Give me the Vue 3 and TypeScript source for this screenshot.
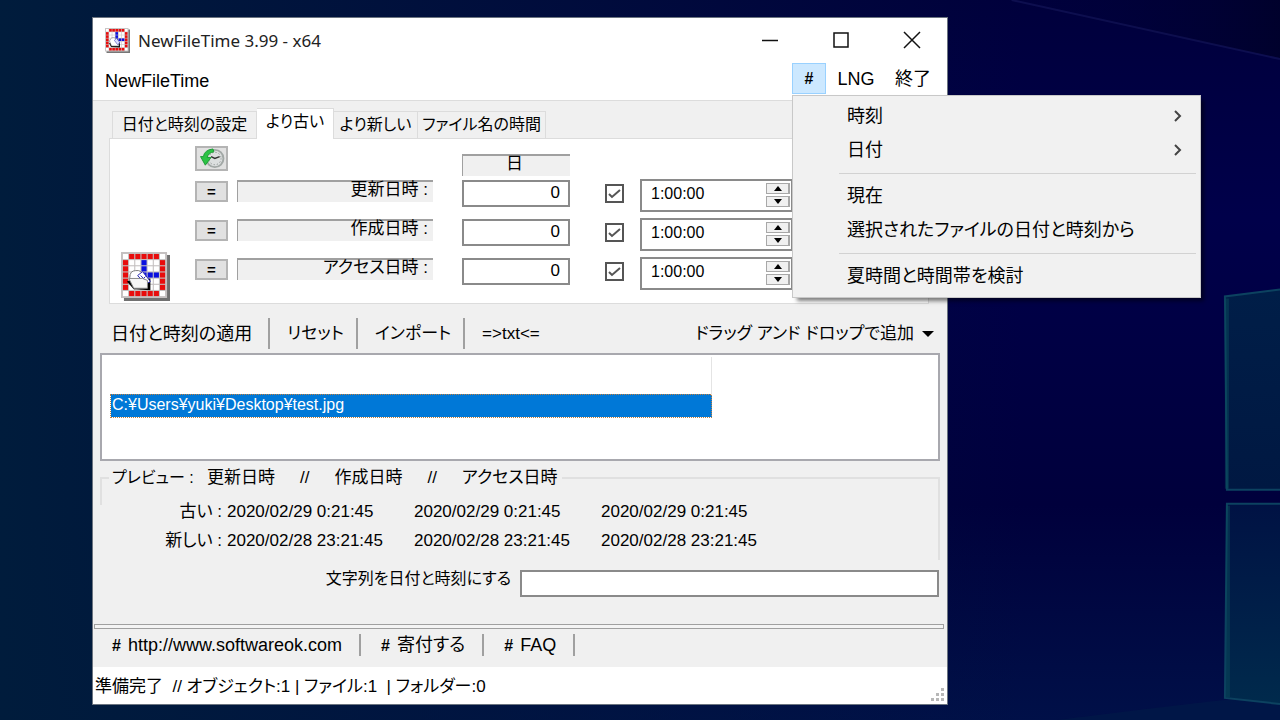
<script setup lang="ts">
import { ref } from 'vue'

interface OffsetRow {
  id: string
  label: string
  days: string
  enabled: boolean
  time: string
}

const tabs: string[] = ['日付と時刻の設定', 'より古い', 'より新しい', 'ファイル名の時間']
const activeTab = ref<number>(1)

const rows = ref<OffsetRow[]>([
  { id: 'modified', label: '更新日時', days: '0', enabled: true, time: '1:00:00' },
  { id: 'created', label: '作成日時', days: '0', enabled: true, time: '1:00:00' },
  { id: 'accessed', label: 'アクセス日時', days: '0', enabled: true, time: '1:00:00' },
])

const files = ref<string[]>(['C:¥Users¥yuki¥Desktop¥test.jpg'])
const actions: string[] = ['日付と時刻の適用', 'リセット', 'インポート', '=>txt<=']
const previews = [
  { label: '古い :', value: '2020/02/29 0:21:45' },
  { label: '新しい :', value: '2020/02/28 23:21:45' },
]
const dateText = ref<string>('')

/* Cells of the 7 x 7 application icon: r = red, b = blue, w = white */
const iconCells: string[] = ['wrrrrrw', 'rwwbwwr', 'rwwbwwr', 'rwwbbbr', 'rwwwwwr', 'rwwwwwr', 'wrrrrrw']
const cellColor: Record<string, string> = { r: '#e80c0c', b: '#0a10e0', w: '#ffffff' }
</script>

<template>
  <div class="desktop">
    <svg class="wallpaper" viewBox="0 0 1280 720" preserveAspectRatio="xMaxYMid slice" aria-hidden="true">
      <defs>
        <linearGradient id="beam" x1="0" y1="0" x2="1" y2="0">
          <stop offset="0" stop-color="#00023c" stop-opacity="0" />
          <stop offset="1" stop-color="#000128" stop-opacity=".8" />
        </linearGradient>
        <linearGradient id="pane" x1="0" y1="0" x2="0" y2="1">
          <stop offset="0" stop-color="#001e48" />
          <stop offset="1" stop-color="#001842" />
        </linearGradient>
        <linearGradient id="pane2" x1="0" y1="0" x2="0" y2="1">
          <stop offset="0" stop-color="#001244" />
          <stop offset="1" stop-color="#002a4c" />
        </linearGradient>
      </defs>
      <path d="M1000 0H1280V58Z" fill="url(#beam)" />
      <path d="M1012 0L1280 59" stroke="#16185c" stroke-width="2" opacity=".6" />
      <path d="M1050 720Q1160 706 1225 699L1280 690V720Z" fill="#001a48" opacity=".6" />
      <path d="M1225 296L1280 289V489H1227Z" fill="url(#pane)" />
      <path d="M1227 503H1280V703L1225 697Z" fill="url(#pane2)" />
      <path d="M1280 289L1225 296L1227 489H1280M1280 503H1227L1225 697L1280 703" fill="none" stroke="#0c4260" stroke-width="2" />
      <path d="M1227 298V488M1228 505V696" stroke="#0a4a5c" stroke-width="4" opacity=".5" />
    </svg>

    <main class="window">
      <header class="titlebar">
        <svg class="app-icon" viewBox="0 0 50 50" aria-hidden="true">
          <path d="M3 3H50V50H3Z" fill="#777" />
          <path d="M0 0H47V47H0Z" fill="#c9c4c4" />
          <template v-for="(line, y) in iconCells" :key="y">
            <rect v-for="(c, x) in line.split('')" :key="x" :x="2 + x * 6.3" :y="2 + y * 6.3" width="5.2" height="5.2" :fill="cellColor[c]" />
          </template>
          <path d="M8 30L30 28V39L12 38Z" fill="#111" />
          <path d="M9 26Q12 17 20 20L26 24L28 36H13Z" fill="#fff" stroke="#555" />
          <path d="M19 25L23 20L30 30L25 33Z" fill="#dde0ff" stroke="#2020a0" />
        </svg>
        <h1>NewFileTime 3.99 - x64</h1>
        <div class="captions">
          <button type="button" aria-label="最小化"><svg viewBox="0 0 18 18"><path d="M1 9.500H17" /></svg></button>
          <button type="button" aria-label="最大化"><svg viewBox="0 0 18 18"><path d="M2 2H16V16H2Z" /></svg></button>
          <button type="button" aria-label="閉じる"><svg viewBox="0 0 18 18"><path d="M1 1L17 17M17 1L1 17" /></svg></button>
        </div>
      </header>

      <nav class="menubar">
        <button type="button" class="menu-item brand">NewFileTime</button>
        <div class="menu-anchor">
          <button type="button" class="menu-item hash" aria-haspopup="menu" aria-expanded="true">#</button>
          <div class="popup" role="menu">
            <button type="button" role="menuitem">時刻<svg viewBox="0 0 8 12"><path d="M1 1L6 6L1 11" /></svg></button>
            <button type="button" role="menuitem">日付<svg viewBox="0 0 8 12"><path d="M1 1L6 6L1 11" /></svg></button>
            <hr />
            <button type="button" role="menuitem">現在</button>
            <button type="button" role="menuitem">選択されたファイルの日付と時刻から</button>
            <hr />
            <button type="button" role="menuitem">夏時間と時間帯を検討</button>
          </div>
        </div>
        <button type="button" class="menu-item lng">LNG</button>
        <button type="button" class="menu-item quit">終了</button>
      </nav>

      <section class="body">
        <div class="tabs" role="tablist">
          <button
            v-for="(tab, i) in tabs"
            :key="tab"
            type="button"
            role="tab"
            :class="['tab', { active: i === activeTab }]"
            :aria-selected="i === activeTab"
            @click="activeTab = i"
          >{{ tab }}</button>
        </div>

        <div class="panel" role="tabpanel">
          <svg class="big-icon" viewBox="0 0 50 50" aria-hidden="true">
            <path d="M3 3H50V50H3Z" fill="#707070" />
            <path d="M0 0H47V47H0Z" fill="#c4c0c0" />
            <template v-for="(line, y) in iconCells" :key="y">
              <rect v-for="(c, x) in line.split('')" :key="x" :x="2 + x * 6.3" :y="2 + y * 6.3" width="5.2" height="5.2" :fill="cellColor[c]" />
            </template>
            <path d="M6 30L11 28L30 27V39L13 38Z" fill="#000" />
            <path d="M9 26Q9 19 15 19Q21 18 22 24L26 27V30H10Z" fill="#fff" stroke="#777" />
            <path d="M17 24L22 20L30 30L25 33Z" fill="#fff" stroke="#2424b0" />
            <path d="M20 24L26 30M22 28L25 25" stroke="#2424b0" />
            <path d="M8 27H22L27 29V37H13Z" fill="#f6f6f6" stroke="#888" />
          </svg>
          <div class="grid">
            <button type="button" class="small-button clock" aria-label="現在時刻に戻す">
              <svg viewBox="0 0 26 22">
                <circle cx="16" cy="11" r="9" fill="#dcdfdf" stroke="#a2a8a6" stroke-width="2" />
                <circle cx="16" cy="11" r="6.500" fill="none" stroke="#717876" stroke-dasharray="1 2.400" />
                <path d="M12 9L16 11L21 9" fill="none" stroke="#333" stroke-width="1.500" />
                <path d="M14 1Q5 2 4 9H1L6 18L12 10H8Q9 5 15 4Z" fill="#2cc345" stroke="#1c9a35" />
              </svg>
            </button>
            <div class="sunken day">日</div>
            <template v-for="row in rows" :key="row.id">
              <button type="button" class="small-button equals" :aria-label="row.label + ' ='">=</button>
              <label class="sunken name" :for="row.id">{{ row.label }} :</label>
              <input :id="row.id" v-model="row.days" class="days" type="text" />
              <label class="check">
                <input v-model="row.enabled" type="checkbox" :aria-label="row.label" />
                <svg v-if="row.enabled" viewBox="0 0 19 19" aria-hidden="true"><path d="M4 10L7 13L15 6" /></svg>
              </label>
              <div class="time">
                <input v-model="row.time" type="text" :aria-label="row.label + ' 時間'" />
                <div class="spin">
                  <button type="button" aria-label="増やす"><svg viewBox="0 0 10 5"><path d="M1 5L5 0L9 5Z" /></svg></button>
                  <button type="button" aria-label="減らす"><svg viewBox="0 0 10 5"><path d="M1 0L5 5L9 0Z" /></svg></button>
                </div>
              </div>
            </template>
          </div>
        </div>

        <div class="toolbar">
          <button v-for="action in actions" :key="action" type="button">{{ action }}</button>
          <button type="button" class="drop" aria-haspopup="menu">
            ドラッグ アンド ドロップで追加
            <svg viewBox="0 0 12 6"><path d="M0 0H12L6 6Z" /></svg>
          </button>
        </div>

        <div class="list">
          <table>
            <thead><tr><th aria-label="ファイル"></th></tr></thead>
            <tbody><tr v-for="file in files" :key="file"><td>{{ file }}</td></tr></tbody>
          </table>
        </div>

        <fieldset class="preview">
          <legend>
            <span class="head">プレビュー :</span>
            <span>更新日時</span><span>//</span><span>作成日時</span><span>//</span><span>アクセス日時</span>
          </legend>
          <div v-for="p in previews" :key="p.label" class="preview-row">
            <span class="preview-label">{{ p.label }}</span>
            <span v-for="n in 3" :key="n">{{ p.value }}</span>
          </div>
        </fieldset>

        <div class="convert">
          <label for="date-text">文字列を日付と時刻にする</label>
          <input id="date-text" v-model="dateText" type="text" />
        </div>

        <div class="splitter"></div>

        <nav class="links">
          <a href="#home"><b>#</b> http://www.softwareok.com</a>
          <a href="#donate"><b>#</b> 寄付する</a>
          <a href="#faq"><b>#</b> FAQ</a>
        </nav>
      </section>

      <footer class="status">
        <span>準備完了&nbsp; // オブジェクト:1 | ファイル:1&nbsp; | フォルダー:0</span>
        <svg viewBox="0 0 13 13" aria-hidden="true">
          <path d="M10 0h3v3h-3zM5 5h3v3H5zM10 5h3v3h-3zM0 10h3v3H0zM5 10h3v3H5zM10 10h3v3h-3z" />
        </svg>
      </footer>
    </main>
  </div>
</template>

<style>
body {
  margin: 0;
  background: #00083a;
}
</style>

<style scoped>
* {
  box-sizing: border-box;
}

.desktop {
  position: relative;
  min-height: 100vh;
  padding: 17px 332px 16px 92px;
  overflow: hidden;
  color: #000;
  font-family: "Liberation Sans", "Noto Sans CJK JP", sans-serif;
  font-size: 17px;
  line-height: 20px;
  font-feature-settings: "palt";
  background:
    linear-gradient(90deg, #001c3c 0%, rgba(0, 24, 60, 0.7) 30%, rgba(0, 8, 60, 0) 80%),
    linear-gradient(180deg, #00003c 0%, #00004a 30%, #00003c 70%, #001048 100%);
}

.wallpaper {
  position: absolute;
  inset: 0;
  width: 100%;
  height: 100%;
}

button,
input {
  margin: 0;
  padding: 0;
  border: 0;
  border-radius: 0;
  outline: 0;
  background: none;
  color: inherit;
  font: inherit;
  font-feature-settings: inherit;
}

button {
  white-space: nowrap;
}

.window {
  position: relative;
  border: 1px solid #6b7480;
  background: #fff;
}

.titlebar {
  display: flex;
  align-items: center;
  height: 45px;
  padding-left: 12px;
}

.app-icon {
  width: 25px;
  height: 25px;
}

.titlebar h1 {
  flex: 1;
  margin: 0 0 0 8px;
  font-family: "Noto Sans", sans-serif;
  font-size: 17px;
  font-weight: 400;
  color: #222;
}

.captions {
  display: flex;
  align-self: flex-start;
}

.captions button {
  display: grid;
  place-items: center;
  width: 71px;
  height: 43px;
}

.captions svg {
  width: 18px;
  height: 18px;
  fill: none;
  stroke: #111;
  stroke-width: 1.5;
}

.menubar {
  display: flex;
  align-items: center;
  height: 38px;
  padding: 0 7px 6px 12px;
  border-bottom: 1px solid #dcdcdc;
  font-size: 18px;
}

.brand {
  margin-right: auto;
  padding-top: 4px;
}

.menu-anchor {
  position: relative;
}

.hash {
  width: 34px;
  height: 31px;
  border: 1px solid #99d1ff;
  background: #cce8ff;
  font-size: 16px;
  font-weight: 700;
}

.lng {
  width: 60px;
}

.quit {
  width: 54px;
}

.popup {
  position: absolute;
  z-index: 2;
  top: 32px;
  left: 0;
  display: flex;
  flex-direction: column;
  width: 409px;
  padding: 3px 4px 4px;
  border: 1px solid #c8c8c8;
  background: #f1f1f1;
  box-shadow: 4px 4px 4px -1px rgba(0, 0, 0, 0.5);
}

.popup button {
  display: flex;
  align-items: center;
  justify-content: space-between;
  height: 34px;
  padding: 0 14px 0 50px;
  font-size: 18px;
  text-align: left;
}

.popup svg {
  width: 8px;
  height: 12px;
  fill: none;
  stroke: #444;
  stroke-width: 2;
}

.popup hr {
  width: 357px;
  height: 1px;
  margin: 6px 0 5px auto;
  border: 0;
  background: #d2d2d2;
}

.body {
  padding: 7px 7px 0;
  background: #f0f0f0;
}

.tabs {
  display: grid;
  grid-template-columns: 145px 77px 84px 128px;
  align-items: end;
  height: 30px;
  padding-left: 12px;
  font-size: 16px;
}

.tab {
  height: 27px;
  border: 1px solid #dcdcdc;
  border-bottom: 0;
  border-left: 0;
}

.tab:first-child {
  border-left: 1px solid #dcdcdc;
}

.tab.active {
  position: relative;
  z-index: 1;
  height: 31px;
  margin-bottom: -1px;
  padding-bottom: 5px;
  background: #fff;
}

.panel {
  display: flex;
  height: 166px;
  margin: 0 11px 0 9px;
  border: 1px solid #dcdcdc;
  background: #fff;
}

.big-icon {
  flex: none;
  align-self: flex-end;
  width: 49px;
  height: 49px;
  margin: 0 25px 2px 11px;
}

.grid {
  display: grid;
  grid-template-columns: 33px 9px 196px 29px 108px 35px 20px 15px 153px;
  grid-template-rows: 33px 39px 39px 39px;
  align-items: start;
  padding-top: 7px;
}

.small-button {
  grid-column: 1;
  height: 21px;
  margin-top: 2px;
  border: 2px solid #b4b4b4;
  background: #e1e1e1;
  font-size: 15px;
  font-weight: 700;
  line-height: 15px;
}

.clock {
  display: grid;
  place-items: center;
  height: 25px;
  margin-top: 0;
}

.clock svg {
  width: 26px;
  height: 21px;
}

.sunken {
  height: 22px;
  margin-top: 1px;
  border-top: 2px solid #a0a0a0;
  border-left: 1px solid #a0a0a0;
  background: #f0f0f0;
  line-height: 16px;
}

.day {
  grid-column: 5;
  margin-top: 8px;
  padding-right: 4px;
  text-align: center;
}

.name {
  grid-column: 3;
  padding-right: 5px;
  text-align: right;
}

.days {
  grid-column: 5;
  width: 108px;
  height: 27px;
  margin-top: 1px;
  padding: 0 8px 2px;
  border: 2px solid #8a8a8a;
  text-align: right;
}

.check {
  grid-column: 7;
  display: grid;
  margin-top: 5px;
}

.check input,
.check svg {
  grid-area: 1 / 1;
  width: 19px;
  height: 19px;
}

.check input {
  appearance: none;
  border: 2px solid #555;
  background: #fff;
}

.check svg {
  fill: none;
  stroke: #555;
  stroke-width: 2;
  pointer-events: none;
}

.time {
  grid-column: 9;
  display: flex;
  height: 33px;
  padding: 2px 0 3px;
  border: 2px solid #8a8a8a;
}

.time input {
  flex: 1;
  min-width: 0;
  padding: 0 0 3px 9px;
  font-size: 16px;
}

.spin {
  display: flex;
  flex-direction: column;
  gap: 2px;
  width: 25px;
}

.spin button {
  display: grid;
  place-items: center;
  width: 24px;
  height: 11px;
  border: 1px solid #a8a8a8;
  border-width: 1px 2px 1px 1px;
  background: #f0f0f0;
}

.spin svg {
  width: 10px;
  height: 5px;
}

.toolbar {
  display: flex;
  align-items: center;
  height: 49px;
  padding: 10px 6px 0 0;
}

.toolbar button {
  height: 31px;
  padding: 0 12px 0 17px;
  border-left: 2px solid #a0a0a0;
}

.toolbar button:first-child {
  padding: 0 16px 0 11px;
  border: 0;
  font-size: 18px;
}

.toolbar .drop {
  display: flex;
  align-items: center;
  gap: 8px;
  margin-left: auto;
  padding: 0;
  border: 0;
}

.drop svg {
  width: 12px;
  height: 6px;
}

.list {
  height: 108px;
  padding: 2px 8px;
  border: 2px solid #a8a8ae;
  background: #fff;
}

.list table {
  width: 602px;
  border-collapse: collapse;
}

.list th {
  height: 37px;
  padding: 0;
  border-right: 1px solid #e4e4e4;
}

.list td {
  height: 23px;
  padding: 0 0 2px 1px;
  border: 1px dotted #c08040;
  background: #0078d7;
  color: #fff;
  font-size: 16px;
  line-height: 18px;
}

.preview {
  height: 92px;
  min-width: 0;
  margin: 7px 0 0;
  padding: 14px 0 0;
  border: 2px solid #e0e0e0;
  border-bottom: 0;
  border-left: 0;
  background: linear-gradient(#e0e0e0, #e0e0e0) 0 0 / 2px 26px no-repeat;
}

.preview legend {
  display: flex;
  margin-left: 9px;
  padding: 0 4px 0 3px;
  gap: 0 25px;
}

.preview .head {
  width: 70px;
  font-size: 16px;
  white-space: nowrap;
}

.preview-row {
  display: grid;
  grid-template-columns: 122px 182px 182px 1fr;
  gap: 5px;
  height: 29px;
}

.preview-label {
  text-align: right;
}

.convert {
  display: flex;
  gap: 9px;
  margin-top: 10px;
  padding-right: 1px;
}

.convert label {
  width: 411px;
  font-size: 16px;
  line-height: 18px;
  text-align: right;
}

.convert input {
  flex: 1;
  min-width: 0;
  height: 27px;
  padding: 0 6px;
  border: 2px solid #8a8a8a;
  background: #fff;
}

.splitter {
  height: 5px;
  margin: 27px -4px 0 -6px;
  border: 1px solid #a0a0a0;
  background: #f4f4f4;
}

.links {
  display: flex;
  align-items: center;
  height: 38px;
  padding: 0 0 6px 12px;
  font-size: 18px;
}

.links a {
  height: 22px;
  margin-right: 20px;
  padding-right: 17px;
  border-right: 2px solid #a0a0a0;
  color: inherit;
  line-height: 22px;
  text-decoration: none;
}

.links b {
  margin-right: 2px;
  font-size: 16px;
}

.status {
  display: flex;
  align-items: center;
  justify-content: space-between;
  height: 37px;
  padding: 2px 3px 0 2px;
}

.status svg {
  align-self: flex-end;
  width: 13px;
  height: 13px;
  margin-bottom: 3px;
  fill: #b8b8b8;
}
</style>
